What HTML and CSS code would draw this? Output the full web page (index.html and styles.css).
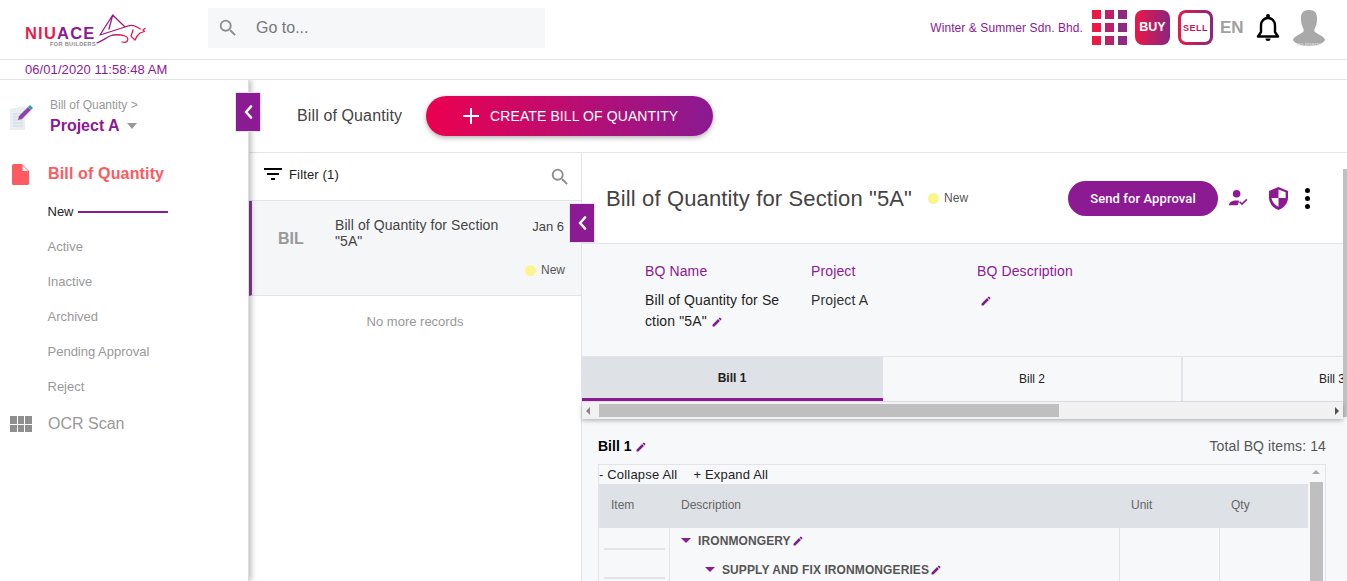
FILE: index.html
```html
<!DOCTYPE html>
<html lang="en">
<head>
<meta charset="utf-8">
<title>Bill of Quantity</title>
<link rel="stylesheet" href="styles.css">
</head>
<body>
<svg class="sprite" aria-hidden="true">
  <defs>
    <symbol id="pencil" viewBox="0 0 24 24"><path d="M3 17.250V21h3.750L17.810 9.940l-3.750-3.750L3 17.250zM20.710 7.040a1 1 0 0 0 0-1.410l-2.340-2.340a1 1 0 0 0-1.410 0l-1.830 1.830 3.750 3.750 1.830-1.830z"/></symbol>
    <symbol id="search" viewBox="0 0 24 24"><path d="M15.500 14h-.79l-.28-.27A6.470 6.470 0 0 0 16 9.500 6.500 6.500 0 1 0 9.500 16c1.610 0 3.090-.59 4.230-1.570l.27.28v.79l5 4.990L20.490 19l-4.990-5zm-6 0C7.010 14 5 11.990 5 9.500S7.010 5 9.500 5 14 7.010 14 9.500 11.990 14 9.500 14z"/></symbol>
    <symbol id="chevron" viewBox="0 0 10 14"><path d="M8 1.500 3 7l5 5.500" fill="none" stroke="#fff" stroke-width="2.600" stroke-linecap="round" stroke-linejoin="round"/></symbol>
  </defs>
</svg>

<header class="topbar">
  <div class="logo">
    <span class="logo-name"><span class="logo-a">NIU</span><span class="logo-b">ACE</span></span>
    <span class="logo-sub">FOR BUILDERS</span>
    <svg class="logo-bull" viewBox="95 12 52 36" fill="none" stroke-width="1.300" stroke-linecap="round" stroke-linejoin="round">
      <defs>
        <linearGradient id="lg" gradientUnits="userSpaceOnUse" x1="96" x2="128" y1="42" y2="30"><stop offset="0" stop-color="#8b1a93"/><stop offset=".55" stop-color="#c01a68"/><stop offset="1" stop-color="#ee1844"/></linearGradient>
        <linearGradient id="lt" gradientUnits="userSpaceOnUse" x1="100" x2="135" y1="15" y2="30"><stop offset="0" stop-color="#8b1a93"/><stop offset=".6" stop-color="#a81a80"/><stop offset="1" stop-color="#d5185c"/></linearGradient>
      </defs>
      <path stroke="url(#lt)" d="M100 35 112.700 15 125 27 100 35M112.700 15 109 29M125 27c4-2 8-2 11-.5 2 1 3 2 4.500 2.500"/>
      <path stroke="url(#lg)" d="M97 43c5-2 9-5 13-7 4-1.500 10-1.500 15 0 3 1 3.500 3.500 2 5.500-1.500 1.500-3.500 1-5 .5"/>
      <path stroke="#e9174c" d="M133 30c-.5 2.500-1.500 4.500-2 6 1 2 3 3 4 4 1-2.500 2.500-5 5-7l4.500-1.500-1.500-1.500 2-1.500"/>
    </svg>
  </div>
  <div class="goto">
    <svg class="goto-icon"><use href="#search"/></svg>
    <span>Go to...</span>
  </div>
  <div class="top-right">
    <span class="company">Winter &amp; Summer Sdn. Bhd.</span>
    <div class="apps">
      <i class="c1"></i><i class="c2"></i><i class="c3"></i>
      <i class="c1"></i><i class="c2"></i><i class="c3"></i>
      <i class="c1"></i><i class="c2"></i><i class="c3"></i>
    </div>
    <span class="buy">BUY</span>
    <span class="sell"><span>SELL</span></span>
    <span class="lang">EN</span>
    <svg class="bell" viewBox="0 0 24 29" fill="none" stroke="#000" stroke-width="2.400"><path d="M2 23.500h20l-3-4.500v-7a7 7 0 0 0-14 0v7l-3 4.500z" stroke-linejoin="round"/><path d="M9.500 25.500a2.500 2.500 0 0 0 5 0z" fill="#000" stroke="none"/><circle cx="12" cy="3" r="2" fill="#000" stroke="none"/></svg>
    <svg class="avatar" viewBox="0 0 32 36"><path fill="#a9a9a9" d="M8 10C7.500 3 10 0 16 0s8.500 3 8 10c0 3-1 6-2 8-1 2-1 3 0 4 2 2 6 3 8 5 1 1 2 2 2 3-1 3-8 6-16 6S1 33 0 30c0-1 1-2 2-3 2-2 6-3 8-5 1-1 1-2 0-4-1-2-2-5-2-8z"/><text class="avatar-text" x="16" y="35.500" text-anchor="middle">no image</text></svg>
  </div>
</header>

<div class="clock">06/01/2020 11:58:48 AM</div>

<div class="workspace">
  <aside class="sidebar">
    <div class="crumb">
      <svg class="crumb-icon" viewBox="0 0 26 28">
        <path d="M1 6 16 3v24H1z" fill="#e9eef0"/>
        <path d="M4 11h10M4 14h10M4 17h10M4 20h10M4 23h10" stroke="#cfd8dc" stroke-width="1"/>
        <path d="m9 17 1-4L19 4l3 3-9 9z" fill="#8e44ad"/>
        <path d="m19 4 2-2 3 3-2 2z" fill="#27a3a8"/>
      </svg>
      <div>
        <div class="crumb-path">Bill of Quantity &gt;</div>
        <div class="crumb-project">Project A <span class="caret"></span></div>
      </div>
    </div>
    <nav class="nav">
      <div class="nav-head active">
        <svg class="nav-icon" viewBox="0 0 17 21"><path d="M1.500 0H10l7 7v12.500a1.500 1.500 0 0 1-1.500 1.500h-14A1.500 1.500 0 0 1 0 19.500v-18A1.500 1.500 0 0 1 1.500 0z" fill="#ff5a62"/><path d="M10.500 1.500V7h5.500z" fill="#fff"/></svg>
        <span>Bill of Quantity</span>
      </div>
      <ul class="subnav">
        <li class="current">New<span class="rule"></span></li>
        <li>Active</li>
        <li>Inactive</li>
        <li>Archived</li>
        <li>Pending Approval</li>
        <li>Reject</li>
      </ul>
      <div class="nav-head muted">
        <span class="ocr-icon"><i></i><i></i><i></i><i></i><i></i><i></i></span>
        <span>OCR Scan</span>
      </div>
    </nav>
  </aside>

  <main class="main">
    <button class="tab-toggle toggle-side" type="button" aria-label="Collapse"><svg><use href="#chevron"/></svg></button>
    <div class="page-title">
      <span>Bill of Quantity</span>
      <button class="create" type="button"><span class="plus"></span>CREATE BILL OF QUANTITY</button>
    </div>
    <div class="split">
      <section class="list">
        <button class="tab-toggle toggle-list" type="button" aria-label="Collapse"><svg><use href="#chevron"/></svg></button>
        <div class="list-head">
          <svg class="filter-icon" viewBox="0 0 18 12"><path d="M0 0h18v2H0zM3 5h12v2H3zM7 10h4v2H7z"/></svg>
          <span class="filter-text">Filter (1)</span>
          <svg class="list-search"><use href="#search"/></svg>
        </div>
        <article class="card">
          <span class="card-code">BIL</span>
          <div class="card-title">Bill of Quantity for Section "5A"</div>
          <div class="card-side">
            <span class="card-date">Jan 6</span>
            <span class="status"><i class="dot"></i>New</span>
          </div>
        </article>
        <p class="no-more">No more records</p>
      </section>

      <section class="detail">
        <div class="detail-head">
          <h1>Bill of Quantity for Section "5A"</h1>
          <span class="status"><i class="dot"></i>New</span>
          <button class="send" type="button">Send for Approval</button>
          <svg class="act-user" viewBox="0 0 20 18" fill="#8b1a93"><circle cx="8" cy="4.500" r="4"/><path d="M0 16.500c0-3 3-5 8-5 1 0 2 .1 2.800.3L9 16.500zM10.500 13.500l1.200-1.200 2 2 4.500-4.500 1.200 1.200-5.700 5.700z"/></svg>
          <svg class="act-shield" viewBox="0 0 20 24" fill="#8b1a93"><path d="M10 0 0 4v7c0 6 4 11 10 13 6-2 10-7 10-13V4z"/><path d="M10 2.500v9h7.500V5.500zM10 11.500H2.700c.6 4 3.500 7.500 7.300 9.200z" fill="#fff"/></svg>
          <span class="act-more"><i></i><i></i><i></i></span>
        </div>
        <div class="info">
          <div class="info-col">
            <div class="info-label">BQ Name</div>
            <div class="info-value name-value">Bill of Quantity for Section "5A" <svg class="pencil"><use href="#pencil"/></svg></div>
          </div>
          <div class="info-col">
            <div class="info-label">Project</div>
            <div class="info-value">Project A</div>
          </div>
          <div class="info-col">
            <div class="info-label">BQ Description</div>
            <div class="info-value"><svg class="pencil pencil-desc"><use href="#pencil"/></svg></div>
          </div>
        </div>
        <div class="tabs">
          <div class="tab selected">Bill 1</div>
          <div class="tab">Bill 2</div>
          <div class="tab">Bill 3</div>
        </div>
        <div class="hscroll">
          <span class="arrow arrow-left"></span>
          <span class="hthumb"></span>
          <span class="arrow arrow-right"></span>
        </div>
        <div class="bill">
          <div class="bill-head">
            <span class="bill-name">Bill 1 <svg class="pencil"><use href="#pencil"/></svg></span>
            <span class="bill-total">Total BQ items: 14</span>
          </div>
          <div class="grid-box">
            <div class="grid-main">
              <div class="grid-tools"><span>- Collapse All</span><span>+ Expand All</span></div>
              <div class="grid-row grid-header">
                <span>Item</span><span>Description</span><span>Unit</span><span>Qty</span>
              </div>
              <div class="grid-row grid-body">
                <span class="cell-item"><i></i></span>
                <span class="cell-desc lvl1"><i class="tri"></i>IRONMONGERY<svg class="pencil"><use href="#pencil"/></svg></span>
                <span class="cell"></span><span></span>
              </div>
              <div class="grid-row grid-body">
                <span class="cell-item"><i></i></span>
                <span class="cell-desc lvl2"><i class="tri"></i>SUPPLY AND FIX IRONMONGERIES<svg class="pencil"><use href="#pencil"/></svg></span>
                <span class="cell"></span><span></span>
              </div>
            </div>
            <div class="vscroll"><span class="arrow arrow-up"></span><span class="vthumb"></span></div>
          </div>
        </div>
        <span class="page-thumb"></span>
      </section>
    </div>
  </main>
</div>
</body>
</html>
```

FILE: styles.css
```css
* { box-sizing: border-box; }
html, body { height: 100%; margin: 0; }
body {
  display: flex;
  flex-direction: column;
  overflow: hidden;
  background: #fff;
  color: #333;
  font-family: "Liberation Sans", Arial, sans-serif;
  font-size: 14px;
}
.sprite { display: none; }
i { display: block; font-style: normal; }
button { font-family: inherit; border: 0; cursor: pointer; }

/* top bar */
.topbar {
  flex: none;
  display: flex;
  align-items: flex-start;
  height: 60px;
  border-bottom: 1px solid #e3e3e3;
  padding: 8px 22px 0 25px;
}
.logo { position: relative; width: 183px; height: 40px; flex: none; }
.logo-name {
  position: absolute;
  left: 0;
  top: 17px;
  font-size: 16.500px;
  font-weight: 700;
  line-height: 17px;
  letter-spacing: 1.200px;
}
.logo-a { color: #ec1a4c; }
.logo-b { color: #8b1a93; }
.logo-sub {
  position: absolute;
  left: 25px;
  top: 33px;
  font-size: 5.500px;
  line-height: 6px;
  letter-spacing: .4px;
  color: #888;
  font-weight: 700;
}
.logo-bull { position: absolute; left: 70px; top: 4px; width: 52px; height: 36px; overflow: visible; }
.goto {
  flex: none;
  display: flex;
  align-items: center;
  width: 337px;
  height: 40px;
  background: #f6f7f9;
  color: #777;
  font-size: 16px;
  padding-left: 9px;
}
.goto-icon { width: 22px; height: 22px; fill: #8e8e8e; margin-right: 17px; }
.top-right { margin-left: auto; display: flex; align-items: flex-start; height: 40px; margin-top: 2px; }
.company { color: #8b1a93; font-size: 12px; letter-spacing: .08px; line-height: 36px; margin-right: 9px; white-space: nowrap; }
.apps { display: grid; grid-template-columns: repeat(3, 9px); grid-auto-rows: 9px; gap: 4px; width: 35px; margin-right: 8px; }
.c1 { background: #ee1844; }
.c2 { background: #bb2068; }
.c3 { background: #8e2a80; }
.buy {
  width: 35px; height: 35px;
  border-radius: 8px;
  background: linear-gradient(90deg, #ea1846, #8a2580);
  color: #fff;
  font-size: 12.500px;
  font-weight: 700;
  line-height: 35px;
  text-align: center;
  margin-right: 8px;
}
.sell {
  width: 35px; height: 35px;
  border-radius: 8px;
  background: linear-gradient(90deg, #ea1846, #8a2580);
  padding: 3px;
  margin-right: 7px;
}
.sell span {
  display: block;
  height: 29px;
  border-radius: 5px;
  background: #fff;
  color: #c01a5c;
  font-size: 9px;
  font-weight: 700;
  letter-spacing: .5px;
  line-height: 30px;
  text-align: center;
}
.lang { color: #a0a0a0; font-size: 17px; font-weight: 700; line-height: 35px; width: 24px; margin-right: 12px; }
.bell { width: 24px; height: 29px; margin-top: 3px; margin-right: 13px; }
.avatar { width: 32px; height: 36px; }
.avatar-text { fill: #e4e4e4; font-size: 6px; }

.clock {
  flex: none;
  height: 20px;
  padding-left: 25px;
  border-bottom: 1px solid #e3e3e3;
  color: #8b1a93;
  font-size: 13px;
  letter-spacing: .08px;
  line-height: 19px;
}

/* layout */
.workspace { flex: 1; display: flex; min-height: 0; }
.sidebar {
  flex: none;
  width: 249px;
  position: relative;
  z-index: 2;
  background: #fff;
  border-right: 1px solid #dcdcdc;
  box-shadow: 2px 0 6px rgba(0, 0, 0, .28);
  clip-path: inset(0 -12px 0 0);
}
.crumb { display: flex; padding: 18px 0 0 9px; height: 71px; }
.crumb-icon { width: 26px; height: 28px; margin: 5px 15px 0 0; flex: none; }
.crumb-path { color: #999; font-size: 12px; line-height: 14px; }
.crumb-project { color: #8b1a93; font-size: 16px; font-weight: 700; line-height: 27px; white-space: nowrap; }
.caret {
  display: inline-block;
  border: 5.500px solid transparent;
  border-top: 6px solid #999;
  border-bottom: 0;
  margin-left: 3px;
  vertical-align: 2px;
}
.nav { padding-left: 10px; }
.nav-head { display: flex; align-items: center; height: 44px; font-size: 16px; }
.nav-head.active { color: #ff5a62; font-weight: 700; letter-spacing: .15px; padding-top: 2px; }
.nav-head.muted { color: #999; height: 40px; }
.nav-icon { width: 17px; height: 21px; margin: 0 19px 0 2px; flex: none; }
.ocr-icon {
  display: grid;
  grid-template-columns: repeat(3, 6.500px);
  grid-auto-rows: 7.500px;
  gap: 1px;
  margin-right: 17px;
  width: 21px;
}
.ocr-icon i { background: #8e8e8e; }
.subnav { list-style: none; margin: -1px 0 0; padding: 0 0 0 37.500px; font-size: 13px; color: #999; }
.subnav li { height: 35px; line-height: 35px; display: flex; align-items: center; }
.subnav .current { color: #222; }
.rule { width: 90px; height: 2px; background: #8b1a93; margin-left: 4px; }

.main { flex: 1; min-width: 0; position: relative; display: flex; flex-direction: column; background: #f7f8fa; }
.page-title {
  flex: none;
  display: flex;
  align-items: center;
  height: 73px;
  padding: 0 0 1px 48px;
  background: #fff;
  border-bottom: 1px solid #e3e4ea;
  font-size: 16px;
  letter-spacing: .12px;
  color: #444;
}
.create {
  display: flex;
  align-items: center;
  width: 287px;
  height: 40px;
  margin-left: 24px;
  padding-left: 37px;
  border-radius: 20px;
  background: linear-gradient(90deg, #ec004f, #8a1a92);
  box-shadow: 0 2px 5px rgba(0, 0, 0, .3);
  color: #fff;
  font-size: 14px;
  letter-spacing: .1px;
  white-space: nowrap;
}
.plus {
  position: relative;
  width: 16px;
  height: 16px;
  margin-right: 11px;
  background:
    linear-gradient(#fff, #fff) center / 16px 2px no-repeat,
    linear-gradient(#fff, #fff) center / 2px 16px no-repeat;
}
.tab-toggle {
  position: absolute;
  z-index: 3;
  display: flex;
  align-items: center;
  justify-content: center;
  width: 26px;
  height: 40px;
  padding: 0;
  background: #8b1a93;
  border: 1px solid #e3e4ea;
}
.tab-toggle svg { width: 10px; height: 14px; }
.toggle-side { left: -14px; top: 12px; }
.toggle-list { right: -14px; top: 50px; }

.split { flex: 1; display: flex; min-height: 0; }
.list {
  flex: none;
  position: relative;
  z-index: 1;
  width: 333px;
  background: #fff;
  border-right: 1px solid #e3e4ea;
}
.list-head {
  display: flex;
  align-items: flex-start;
  height: 48px;
  padding: 14px 10px 0 15px;
  border-bottom: 1px solid #e3e4ea;
  font-size: 13px;
  letter-spacing: .15px;
  color: #222;
}
.filter-icon { width: 18px; height: 12px; margin-right: 7px; margin-top: 1px; }
.filter-text { flex: 1; }
.list-search { width: 22px; height: 22px; fill: #8e8e8e; margin-top: -1px; }
.card {
  display: flex;
  height: 95px;
  background: #f5f6f8;
  border-left: 3px solid #8a3a95;
  border-bottom: 1px solid #e3e4ea;
}
.card-code { width: 83px; padding: 28px 0 0 26px; color: #999; font-size: 16px; font-weight: 700; line-height: 20px; }
.card-title { width: 178px; padding-top: 16px; font-size: 14px; letter-spacing: .08px; line-height: 16px; color: #444; }
.card-side { flex: 1; display: flex; flex-direction: column; align-items: flex-end; padding: 18px 16px 0 0; font-size: 13px; color: #444; }
.card-date { line-height: 15px; padding-right: 1px; }
.status { display: inline-flex; align-items: center; font-size: 12px; color: #555; }
.card-side .status { margin-top: 29px; }
.dot { width: 11px; height: 11px; border-radius: 50%; background: #fcf58d; margin-right: 5px; }
.no-more { margin: 18px 0 0; text-align: center; font-size: 13px; color: #999; line-height: 16px; }

/* detail */
.detail { flex: 1; min-width: 0; position: relative; display: flex; flex-direction: column; }
.detail-head {
  flex: none;
  display: flex;
  align-items: center;
  height: 91px;
  padding: 0 37px 0 24px;
  background: #fff;
  border-bottom: 1px solid #e3e4ea;
}
.detail-head h1 { margin: 2px 16px 0 0; font-size: 22px; font-weight: 400; letter-spacing: .13px; color: #444; white-space: nowrap; }
.send {
  width: 150px;
  height: 35px;
  margin-left: auto;
  margin-right: 11px;
  border-radius: 17.500px;
  background: #8b1a93;
  color: #fff;
  font-family: Roboto, "Liberation Sans", sans-serif;
  font-size: 13px;
  font-weight: 500;
  letter-spacing: .1px;
}
.act-user { width: 19px; height: 18px; margin-right: 21px; }
.act-shield { width: 19px; height: 23px; margin-right: 17px; }
.act-more { display: grid; gap: 3px; }
.act-more i { width: 5px; height: 5px; border-radius: 50%; background: #000; }
.info {
  flex: none;
  display: flex;
  height: 113px;
  padding: 19px 0 0 63px;
  background: #f7f8fa;
  border-bottom: 1px solid #e3e4ea;
  letter-spacing: .12px;
}
.info-col { width: 166px; }
.info-label { color: #8b1a93; font-size: 14px; line-height: 16px; }
.info-value { margin-top: 11px; font-size: 14px; line-height: 21px; color: #333; }
.name-value { width: 138px; word-break: break-all; color: #222; }
.pencil { display: inline-block; width: 12px; height: 12px; fill: #7f1a8a; vertical-align: -2px; }
.pencil-desc { margin-left: 3px; }
.tabs { flex: none; display: flex; height: 45px; overflow: hidden; margin-right: 4px; border-bottom: 1px solid #e3e4ea; }
.tab {
  flex: none;
  width: 300px;
  border-right: 2px solid #e3e4ea;
  font-size: 12px;
  line-height: 44px;
  text-align: center;
  color: #222;
}
.tab.selected {
  width: 301px;
  padding-right: 1px;
  border-right: 0;
  background: #dee1e5;
  border-bottom: 3px solid #8b1a93;
  font-weight: 700;
  line-height: 42px;
}
.hscroll {
  flex: none;
  position: relative;
  z-index: 1;
  height: 17px;
  margin-right: 4px;
  background: #f1f1f1;
  box-shadow: 0 2px 4px rgba(0, 0, 0, .25);
  display: flex;
  align-items: center;
}
.hthumb { position: absolute; left: 17px; top: 2px; width: 460px; height: 13px; background: #bfbfbf; }
.arrow { position: absolute; width: 0; height: 0; border: 4px solid transparent; }
.arrow-left { left: 4px; top: 4.500px; border-left: 0; border-right-color: #888; }
.arrow-right { right: 4px; top: 4.500px; border-right: 0; border-left-color: #505050; }
.arrow-up { left: 4px; top: 5px; border-top: 0; border-bottom-color: #a8a8a8; }
.bill { flex: 1; min-height: 0; padding: 18px 21px 0 16px; }
.bill-head { display: flex; justify-content: space-between; align-items: center; height: 17px; margin-bottom: 10px; }
.bill-name { font-size: 14px; font-weight: 700; color: #000; }
.bill-total { font-size: 14px; letter-spacing: .12px; color: #555; }
.grid-box { display: flex; border: 1px solid #e3e4ea; border-bottom: 0; }
.grid-main { flex: 1; min-width: 0; }
.grid-tools { display: flex; gap: 16px; height: 19px; font-size: 13px; letter-spacing: .18px; line-height: 20px; color: #222; }
.grid-row { display: grid; grid-template-columns: 71px 450px 100px 1fr; }
.grid-header { height: 44px; background: #dee1e5; color: #666; font-size: 12px; line-height: 42px; }
.grid-header span { padding-left: 11px; }
.grid-header span:first-child { padding-left: 12px; }
.grid-body { height: 29px; }
.cell-item { border-right: 1px solid #e3e4ea; padding: 20px 4px 0 5px; }
.cell-item i { height: 2px; background: #e3e4ea; }
.cell-desc {
  display: flex;
  align-items: center;
  border-right: 1px solid #e3e4ea;
  font-size: 12px;
  font-weight: 700;
  letter-spacing: .1px;
  color: #555;
  white-space: nowrap;
  padding-bottom: 4px;
}
.cell { border-right: 1px solid #e3e4ea; }
.cell-desc .pencil { margin-left: 1px; }
.lvl1 { padding-left: 11px; }
.lvl2 { padding-left: 35px; }
.tri {
  width: 0; height: 0;
  border: 5.500px solid transparent;
  border-top: 5px solid #8b1a93;
  border-bottom: 0;
  margin-right: 7px;
}
.vscroll { flex: none; position: relative; width: 17px; }
.vthumb { position: absolute; left: 2px; top: 17px; width: 13px; height: 120px; background: #bfbfbf; }
.page-thumb { position: absolute; right: 0; top: 16px; width: 4px; height: 248px; background: #c1c1c1; }
```
